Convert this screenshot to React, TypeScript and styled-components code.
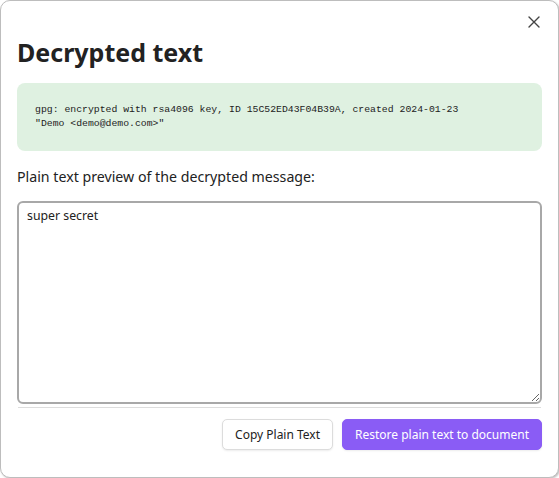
import React from "react";
import styled, { createGlobalStyle } from "styled-components";

const Global = createGlobalStyle`
  html, body { margin: 0; padding: 0; background: #ffffff; }
  body { font-family: "Noto Sans", "Open Sans", sans-serif; }
  * { box-sizing: border-box; }
`;

const Modal = styled.div`
  position: relative;
  width: 559px;
  height: 478px;
  background: #ffffff;
  border: 1px solid #bdbdbd;
  border-radius: 10px;
  box-shadow: 1px 1px 2px rgba(0,0,0,0.25);
  padding: 33px 16px 16px 16px;
  display: flex;
  flex-direction: column;
  color: #222222;
`;

const Close = styled.button`
  position: absolute;
  top: 12px;
  right: 15px;
  width: 18px;
  height: 18px;
  padding: 0;
  border: none;
  background: transparent;
  display: flex;
  align-items: center;
  justify-content: center;
  cursor: pointer;
`;

const Title = styled.h1`
  margin: 0 0 13px 0;
  font-size: 25px;
  line-height: 36px;
  font-weight: 700;
  color: #222222;
`;

const Status = styled.pre`
  margin: 0;
  background: #dff1e1;
  border-radius: 8px;
  padding: 20px 18px;
  font-family: "Liberation Mono", "Courier New", monospace;
  font-size: 9.8px;
  line-height: 14px;
  color: #222222;
  white-space: pre-wrap;
`;

const Label = styled.p`
  margin: 16px 0 14px 0;
  font-size: 14.2px;
  line-height: 20px;
  color: #222222;
`;

const TextArea = styled.textarea`
  display: block;
  width: 100%;
  height: 203px;
  border: 2px solid #a8a8a8;
  border-radius: 6px;
  padding: 4px 8px;
  font-family: "Noto Sans", "Open Sans", sans-serif;
  font-size: 12.3px;
  line-height: 18px;
  color: #222222;
  resize: vertical;
  outline: none;
`;

const Divider = styled.hr`
  margin: 3px 1px 0 1px;
  border: none;
  border-top: 1px solid #dddddd;
`;

const Actions = styled.div`
  display: flex;
  justify-content: flex-end;
  gap: 9px;
  padding-top: 11px;
`;

const Button = styled.button<{ $primary?: boolean }>`
  height: 31px;
  padding: 0 12px;
  border-radius: 5px;
  font-family: "Noto Sans", "Open Sans", sans-serif;
  font-size: 12px;
  cursor: pointer;
  border: 1px solid ${p => (p.$primary ? "#8a5cf5" : "#dcdcdc")};
  background: ${p => (p.$primary ? "#8a5cf5" : "#ffffff")};
  color: ${p => (p.$primary ? "#ffffff" : "#222222")};
  box-shadow: 0 1px 2px rgba(0,0,0,0.08);
`;

export default function App() {
  return (
    <>
      <Global />
      <Modal>
        <Close aria-label="Close">
          <svg width="12" height="12" viewBox="0 0 12 12">
            <path d="M1 1 L11 11 M11 1 L1 11" stroke="#444" strokeWidth="1.4" strokeLinecap="round" />
          </svg>
        </Close>
        <Title>Decrypted text</Title>
        <Status>{`gpg: encrypted with rsa4096 key, ID 15C52ED43F04B39A, created 2024-01-23
"Demo <demo@demo.com>"`}</Status>
        <Label>Plain text preview of the decrypted message:</Label>
        <TextArea defaultValue="super secret" />
        <Divider />
        <Actions>
          <Button>Copy Plain Text</Button>
          <Button $primary>Restore plain text to document</Button>
        </Actions>
      </Modal>
    </>
  );
}
